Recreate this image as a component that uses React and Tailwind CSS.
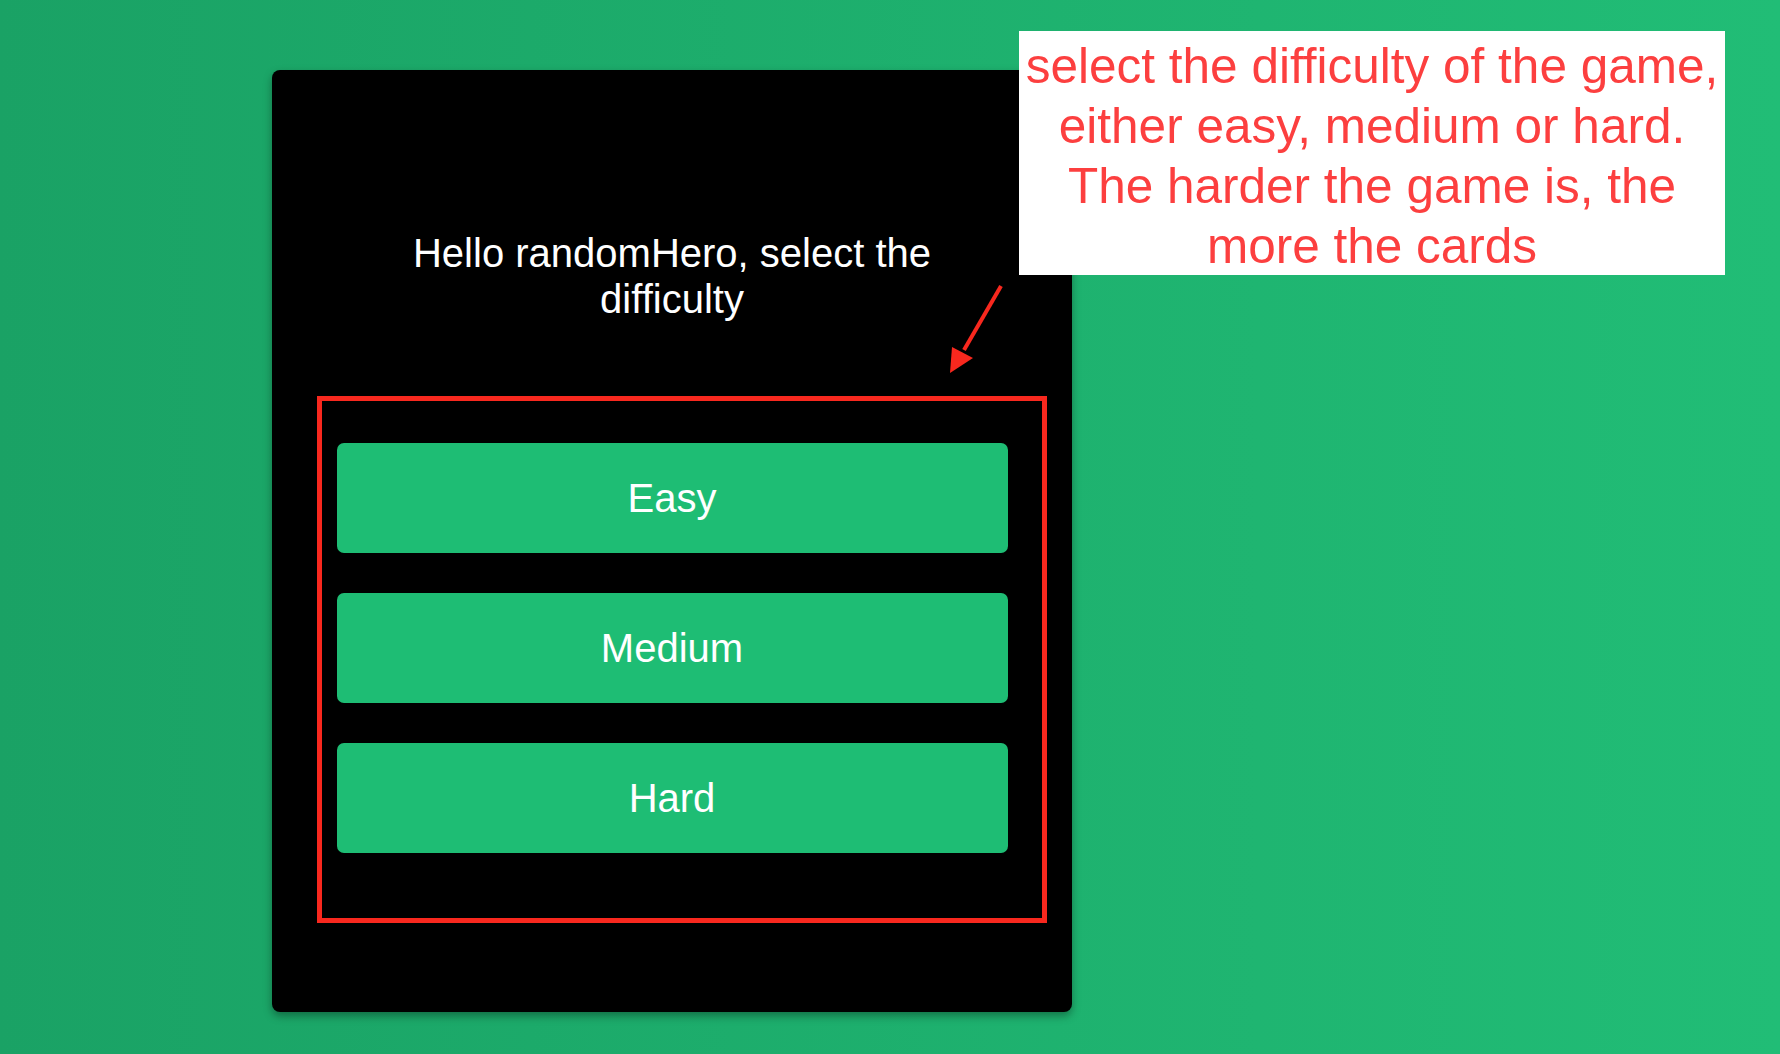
import React from "react";

const levels = ["Easy", "Medium", "Hard"];

const App = () => {
  return (
    <div
      className="relative min-h-screen w-full bg-linear-to-r from-[#1aa265] to-[#21bd76] pt-[70px] pl-[272px] pb-[42px]"
      style={{ fontFamily: '"Liberation Sans", Arial, sans-serif' }}
    >
      {/* Card */}
      <div className="flex h-[942px] w-[800px] flex-col items-center justify-center rounded-lg bg-black shadow-[0_4px_8px_rgba(0,0,0,0.35)]">
        <h1 className="text-center text-[40px] leading-[46px] font-normal text-white">
          Hello randomHero, select the
          <br />
          difficulty
        </h1>
        <div className="mt-[121px] flex w-[671px] flex-col gap-10">
          {levels.map((level) => (
            <button
              key={level}
              className="h-[110px] w-full rounded-[7px] bg-[#1ebd74] text-[40px] text-white"
            >
              {level}
            </button>
          ))}
        </div>
      </div>

      {/* Annotation: red frame */}
      <div className="pointer-events-none absolute left-[317px] top-[396px] h-[527px] w-[730px] border-[5px] border-[#f8281e]" />

      {/* Annotation: arrow */}
      <svg
        className="pointer-events-none absolute left-[940px] top-[280px]"
        width="70"
        height="100"
        viewBox="0 0 70 100"
      >
        <line x1="61" y1="6" x2="24" y2="70" stroke="#f8281e" strokeWidth="4" />
        <polygon points="10,93 12,67 33,78" fill="#f8281e" />
      </svg>

      {/* Annotation: note */}
      <div className="absolute left-[1019px] top-[31px] h-[244px] w-[706px] bg-white pt-[5px] text-center text-[49.5px] leading-[60px] text-[#fc3f3f]">
        select the difficulty of the game,
        <br />
        either easy, medium or hard.
        <br />
        The harder the game is, the
        <br />
        more the cards
      </div>
    </div>
  );
};

export default App;
